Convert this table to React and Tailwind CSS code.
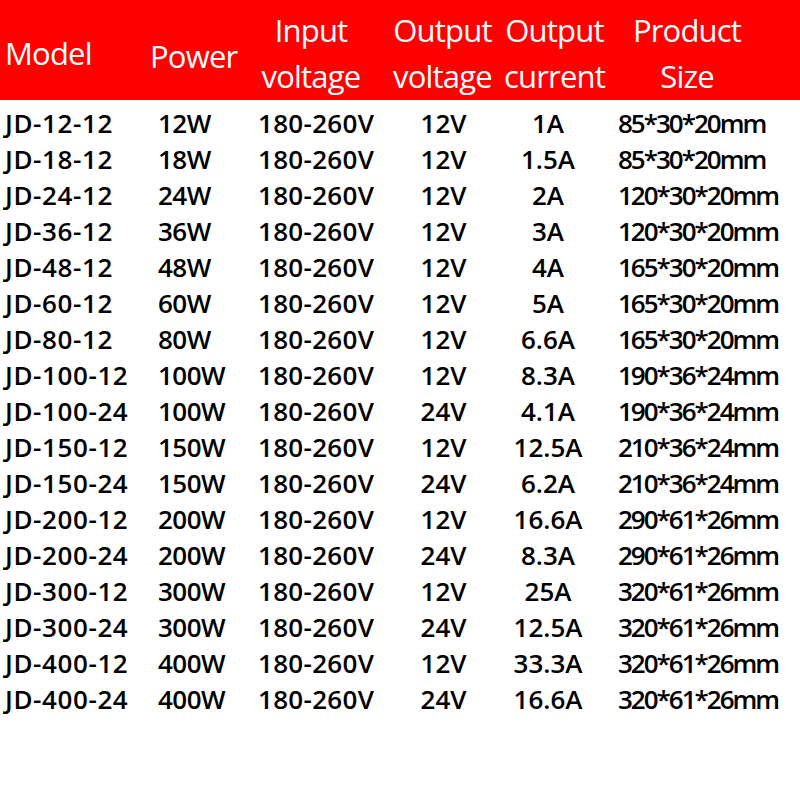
import React from 'react';

const rows = [
  ['JD-12-12', '12W', '12V', '1A', '85*30*20mm'],
  ['JD-18-12', '18W', '12V', '1.5A', '85*30*20mm'],
  ['JD-24-12', '24W', '12V', '2A', '120*30*20mm'],
  ['JD-36-12', '36W', '12V', '3A', '120*30*20mm'],
  ['JD-48-12', '48W', '12V', '4A', '165*30*20mm'],
  ['JD-60-12', '60W', '12V', '5A', '165*30*20mm'],
  ['JD-80-12', '80W', '12V', '6.6A', '165*30*20mm'],
  ['JD-100-12', '100W', '12V', '8.3A', '190*36*24mm'],
  ['JD-100-24', '100W', '24V', '4.1A', '190*36*24mm'],
  ['JD-150-12', '150W', '12V', '12.5A', '210*36*24mm'],
  ['JD-150-24', '150W', '24V', '6.2A', '210*36*24mm'],
  ['JD-200-12', '200W', '12V', '16.6A', '290*61*26mm'],
  ['JD-200-24', '200W', '24V', '8.3A', '290*61*26mm'],
  ['JD-300-12', '300W', '12V', '25A', '320*61*26mm'],
  ['JD-300-24', '300W', '24V', '12.5A', '320*61*26mm'],
  ['JD-400-12', '400W', '12V', '33.3A', '320*61*26mm'],
  ['JD-400-24', '400W', '24V', '16.6A', '320*61*26mm'],
];

const cols = 'grid grid-cols-[150px_105px_130px_115px_115px_185px]';

const App = () => {
  return (
    <div className="w-[800px] h-[800px] bg-white" style={{ fontFamily: '"Open Sans", "Liberation Sans", sans-serif' }}>
      {/* header band */}
      <div className={`${cols} h-[100px] bg-[#ff0000] text-white text-[31px] leading-[46px] tracking-[-0.8px] items-center`}>
        <div className="pl-[5px] pt-[5px]">Model</div>
        <div className="pt-[11px]">Power</div>
        <div className="text-center pr-[18px] pt-[5px]">Input<br />voltage</div>
        <div className="text-center pt-[5px]">Output<br />voltage</div>
        <div className="text-center pr-[6px] pt-[5px]">Output<br />current</div>
        <div className="text-center pr-[41px] pt-[5px]">Product<br />Size</div>
      </div>

      {/* rows */}
      <div className="pt-[5px] text-black text-[26px] font-semibold">
        {rows.map((r) => (
          <div key={r[0]} className={`${cols} h-[36px] items-center leading-none`}>
            <div className="pl-[5px] tracking-[0.6px]">{r[0]}</div>
            <div className="pl-[8px] tracking-[-0.5px]">{r[1]}</div>
            <div className="pl-[3px] tracking-[0.3px]">180-260V</div>
            <div className="text-center pl-[2px]">{r[2]}</div>
            <div className="text-center pr-[19px]">{r[3]}</div>
            <div className="pl-[3px] tracking-[-2px]">{r[4]}</div>
          </div>
        ))}
      </div>
    </div>
  );
};

export default App;
